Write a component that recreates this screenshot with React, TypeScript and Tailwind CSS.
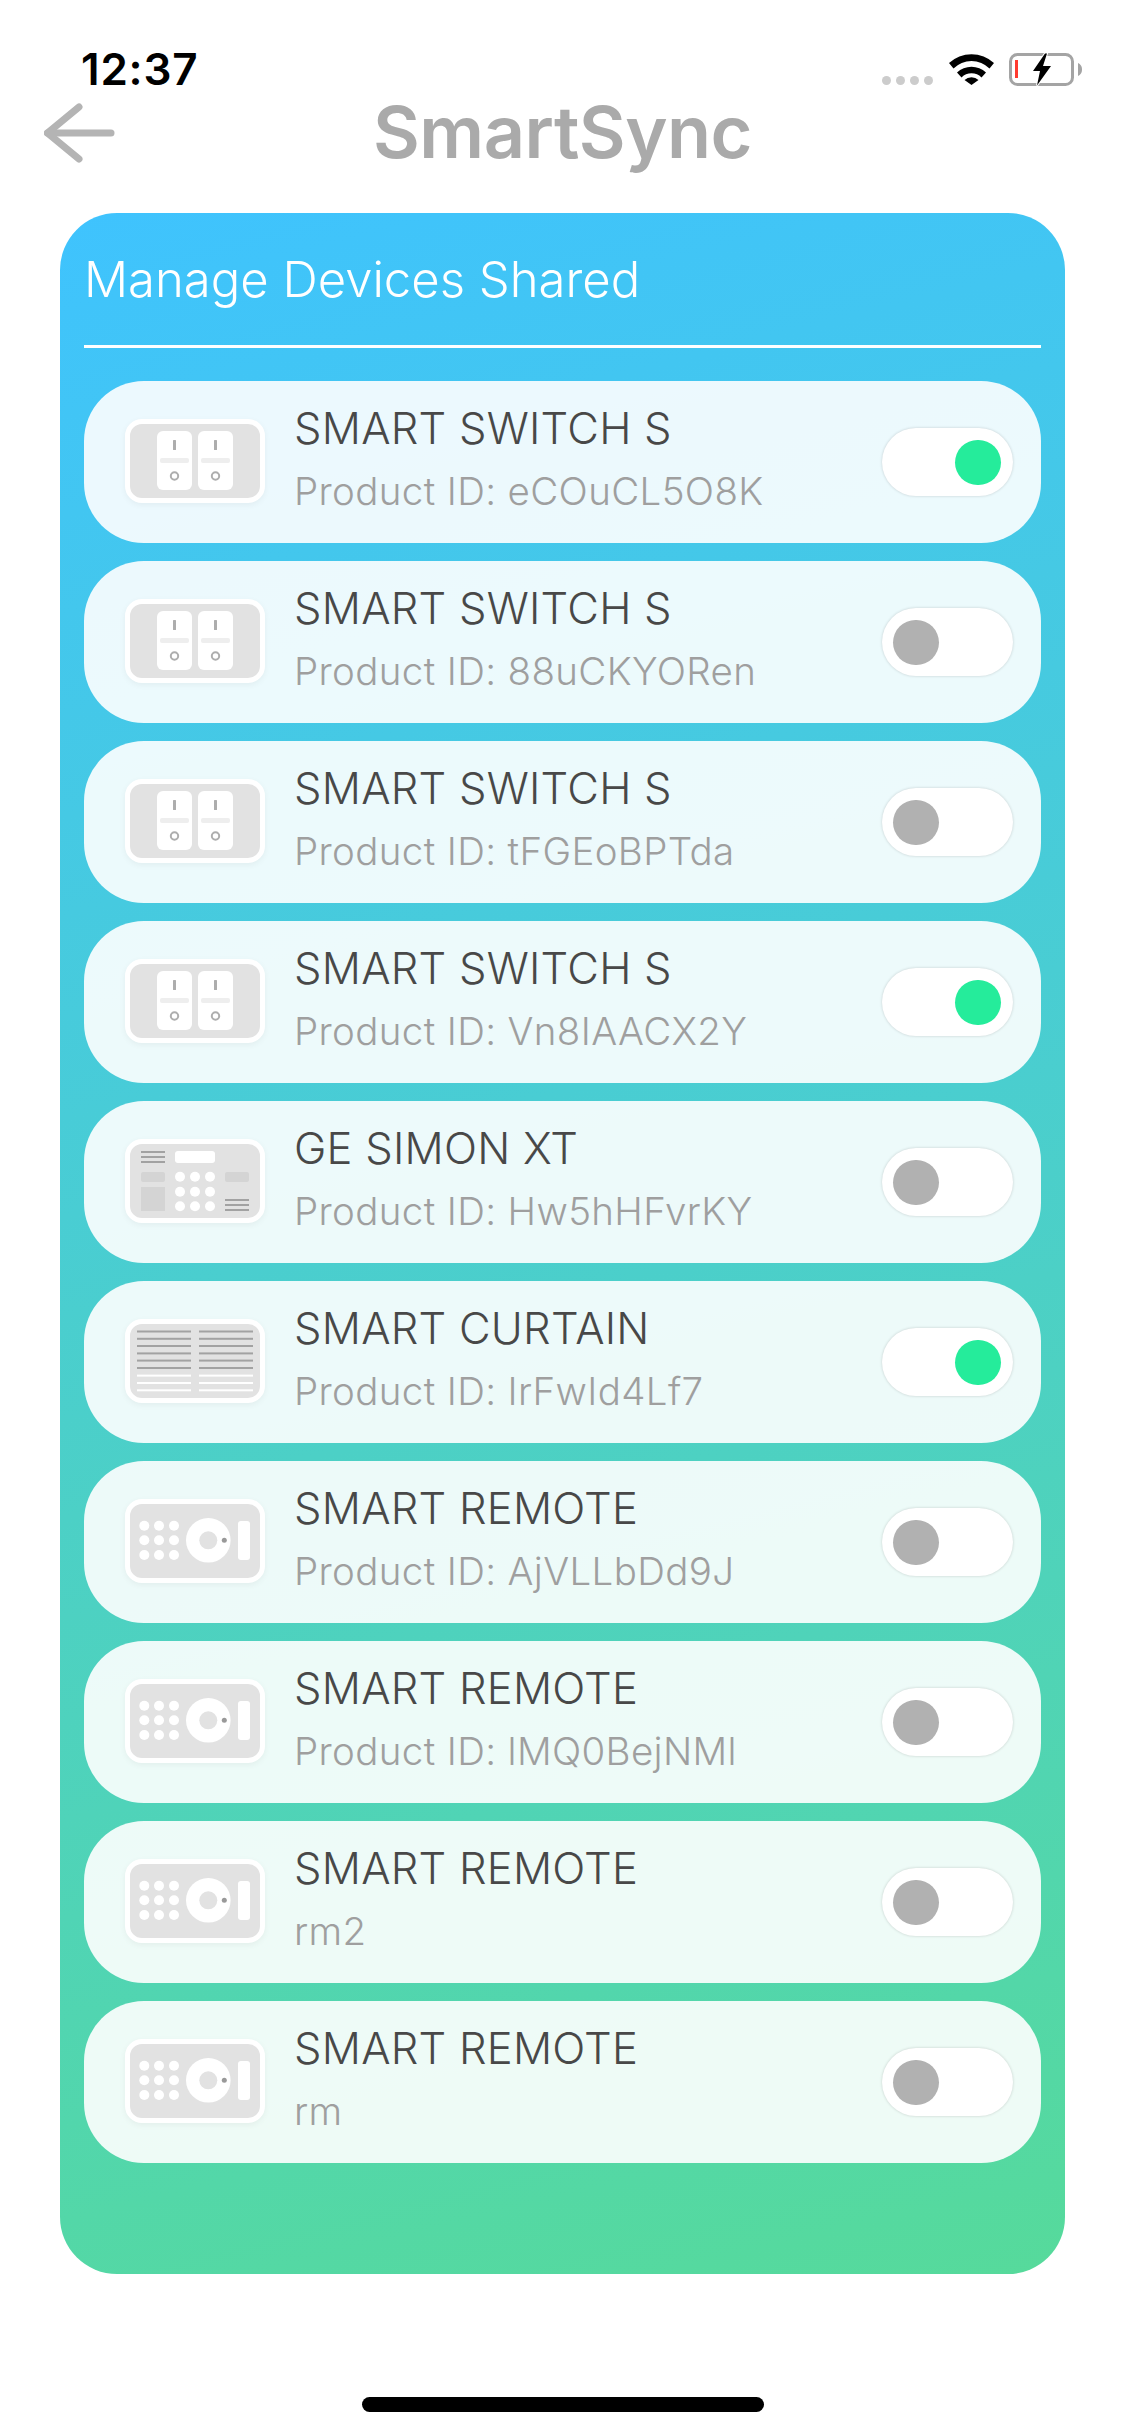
const GRAY = "#e2e2e2";
const LINE = "#a2a2a2";

function Frame({ children }: { children: React.ReactNode }) {
  return (
    <div className="mt-[38px] h-[84px] w-[140px] shrink-0 self-start rounded-[17px] border-[5px] border-white bg-[#e2e2e2] shadow-[0_2px_6px_rgba(0,0,0,0.05)]">
      <svg viewBox="5 5 130 74" className="block h-[74px] w-[130px]">
        {children}
      </svg>
    </div>
  );
}

function Plate({ x }: { x: number }) {
  return (
    <g>
      <rect x={x} y={12} width={35} height={59} rx={6} fill="#fff" />
      <rect x={x + 16} y={21} width={3} height={10} rx={0.5} fill="#adadad" />
      <rect x={x + 3} y={39} width={29} height={5} rx={2} fill="#eeeeee" />
      <circle cx={x + 17.5} cy={57} r={3.7} fill="none" stroke="#adadad" strokeWidth={2} />
    </g>
  );
}

function SwitchIcon() {
  return (
    <Frame>
      <Plate x={32} />
      <Plate x={73} />
    </Frame>
  );
}

function AlarmIcon() {
  const cols = [55, 70, 85];
  const rows = [37.7, 52.7, 67.3];
  return (
    <Frame>
      {[12, 17, 22].map((y) => (
        <rect key={y} x={16} y={y} width={24} height={2} fill={LINE} />
      ))}
      <rect x={50} y={12} width={40} height={12} rx={3} fill="#fff" />
      <rect x={16} y={33} width={24} height={10} rx={2} fill="#d4d4d4" />
      <rect x={16} y={48} width={24} height={24} fill="#d4d4d4" />
      {rows.map((y) => cols.map((x) => <circle key={`${x}-${y}`} cx={x} cy={y} r={5} fill="#fff" />))}
      <rect x={100} y={33} width={24} height={10} rx={2} fill="#d4d4d4" />
      {[60, 65, 70].map((y) => (
        <rect key={y} x={100} y={y} width={24} height={2} fill={LINE} />
      ))}
    </Frame>
  );
}

function CurtainIcon() {
  const gray = [11.5, 18.8, 26, 33.4, 40.6, 48];
  const white = [55.6, 63, 70.3];
  return (
    <Frame>
      {[12, 74].map((x) => (
        <g key={x}>
          {gray.map((y) => (
            <rect key={y} x={x} y={y} width={54} height={2} fill={LINE} />
          ))}
          {white.map((y) => (
            <rect key={y} x={x} y={y} width={54} height={2} fill="#fff" />
          ))}
        </g>
      ))}
    </Frame>
  );
}

function RemoteIcon() {
  const cols = [19.3, 34, 49];
  const rows = [26.7, 41.3, 56];
  return (
    <Frame>
      {rows.map((y) => cols.map((x) => <circle key={`${x}-${y}`} cx={x} cy={y} r={5} fill="#fff" />))}
      <circle cx={83.3} cy={41.3} r={22.3} fill="#fff" />
      <circle cx={83.3} cy={41.3} r={9} fill={GRAY} />
      <circle cx={99.3} cy={41.3} r={2.5} fill="#999" />
      <rect x={113} y={22} width={12} height={39} rx={3} fill="#fff" />
    </Frame>
  );
}

function Toggle({ on }: { on: boolean }) {
  return (
    <div
      className={`flex h-[68px] w-[131px] shrink-0 items-center rounded-full bg-white pl-[11px] pr-[12px] shadow-[0_0_3px_rgba(0,0,0,0.18)] ${on ? "justify-end" : "justify-start"}`}
    >
      <div className={`h-[45px] w-[46px] rounded-full ${on ? "bg-[#25ec9b]" : "bg-[#b1b1b1]"}`} />
    </div>
  );
}

type Device = { kind: "switch" | "alarm" | "curtain" | "remote"; name: string; sub: string; on: boolean };

const devices: Device[] = [
  { kind: "switch", name: "SMART SWITCH S", sub: "Product ID: eCOuCL5O8K", on: true },
  { kind: "switch", name: "SMART SWITCH S", sub: "Product ID: 88uCKYORen", on: false },
  { kind: "switch", name: "SMART SWITCH S", sub: "Product ID: tFGEoBPTda", on: false },
  { kind: "switch", name: "SMART SWITCH S", sub: "Product ID: Vn8IAACX2Y", on: true },
  { kind: "alarm", name: "GE SIMON XT", sub: "Product ID: Hw5hHFvrKY", on: false },
  { kind: "curtain", name: "SMART CURTAIN", sub: "Product ID: IrFwId4Lf7", on: true },
  { kind: "remote", name: "SMART REMOTE", sub: "Product ID: AjVLLbDd9J", on: false },
  { kind: "remote", name: "SMART REMOTE", sub: "Product ID: lMQ0BejNMl", on: false },
  { kind: "remote", name: "SMART REMOTE", sub: "rm2", on: false },
  { kind: "remote", name: "SMART REMOTE", sub: "rm", on: false },
];

function DeviceIcon({ kind }: { kind: Device["kind"] }) {
  if (kind === "switch") return <SwitchIcon />;
  if (kind === "alarm") return <AlarmIcon />;
  if (kind === "curtain") return <CurtainIcon />;
  return <RemoteIcon />;
}

function Row({ d }: { d: Device }) {
  return (
    <div className="flex h-[162px] items-center rounded-[60px] bg-white/90 pl-[41px] pr-[28px]">
      <DeviceIcon kind={d.kind} />
      <div className="ml-[29px] flex min-w-0 flex-1 -translate-y-[2.5px] flex-col">
        <div className="text-[43.5px] font-light leading-[60px] tracking-[0.25px] text-[#484848]">{d.name}</div>
        <div className="mt-[3px] text-[38.5px] font-light leading-[61px] tracking-[0.35px] text-[#9f9f9f]">{d.sub}</div>
      </div>
      <Toggle on={d.on} />
    </div>
  );
}

function StatusBar() {
  return (
    <div className="flex h-[86px] items-end justify-between pl-[81px] pr-[43px]">
      <div className="mb-[1px] text-[44px] font-semibold leading-[32px] tracking-[0.8px] text-black">12:37</div>
      <div className="flex items-end">
        <div className="mb-[1px] mr-[16px] flex gap-[5px]">
          {[0, 1, 2, 3].map((i) => (
            <div key={i} className="h-[9px] w-[9px] rounded-full bg-[#cccccc]" />
          ))}
        </div>
        <svg viewBox="0 0 45 33" className="mb-[1px] mr-[15px] h-[33px] w-[45px]">
          <path d="M0 11 A33 33 0 0 1 45 11 L40.5 16.5 A25.5 25.5 0 0 0 4.5 16.5 Z" fill="#000" />
          <path d="M8 20.5 A21 21 0 0 1 37 20.5 L32.5 25.5 A14 14 0 0 0 12.5 25.5 Z" fill="#000" />
          <path d="M15.5 28 A10 10 0 0 1 29.5 28 L22.5 33 Z" fill="#000" />
        </svg>
        <svg viewBox="0 0 73 33" className="h-[33px] w-[73px]">
          <rect x="1.5" y="1.5" width="62" height="30" rx="7" fill="none" stroke="#a4a4a4" strokeWidth="3" />
          <path d="M69 10 A7 7 0 0 1 73 16.5 A7 7 0 0 1 69 23 Z" fill="#a4a4a4" />
          <rect x="6" y="7" width="3" height="18" fill="#ff3b30" />
          <path d="M36 0.5 L24 18 L31 18 L28 32.5 L42 13 L34 13 L38 0.5 Z" fill="#000" stroke="#fff" strokeWidth="2" paintOrder="stroke" />
        </svg>
      </div>
    </div>
  );
}

function Header() {
  return (
    <div className="relative mt-[8px] flex h-[70px] items-center justify-center pt-[6px]">
      <svg viewBox="0 0 72 60" className="absolute left-[44px] top-[9px] h-[60px] w-[72px]" fill="none" stroke="#b4b4b4" strokeWidth="7" strokeLinecap="round" strokeLinejoin="round">
        <path d="M35 4 L3.5 30 L35 56" />
        <path d="M3.5 30 H67" />
      </svg>
      <div className="text-[72px] font-semibold leading-[70px] tracking-[-0.5px] text-[#aaaaaa]">SmartSync</div>
    </div>
  );
}

export default function App() {
  return (
    <div className="flex h-[2436px] w-[1125px] flex-col bg-white font-['Inter','Liberation_Sans',sans-serif]">
      <StatusBar />
      <Header />
      <div className="mx-auto mt-[49px] h-[2061px] w-[1005px] rounded-[57px] bg-[linear-gradient(166deg,#3fc3fe_0%,#56da9b_100%)] px-[24px] pt-[35px]">
        <div className="text-[49px] font-light leading-[64px] text-white">Manage Devices Shared</div>
        <div className="mt-[33px] h-[3px] bg-white" />
        <div className="mt-[33px] flex flex-col gap-[18px]">
          {devices.map((d, i) => (
            <Row key={i} d={d} />
          ))}
        </div>
      </div>
      <div className="mx-auto mt-[123px] h-[15px] w-[402px] rounded-full bg-black" />
    </div>
  );
}
